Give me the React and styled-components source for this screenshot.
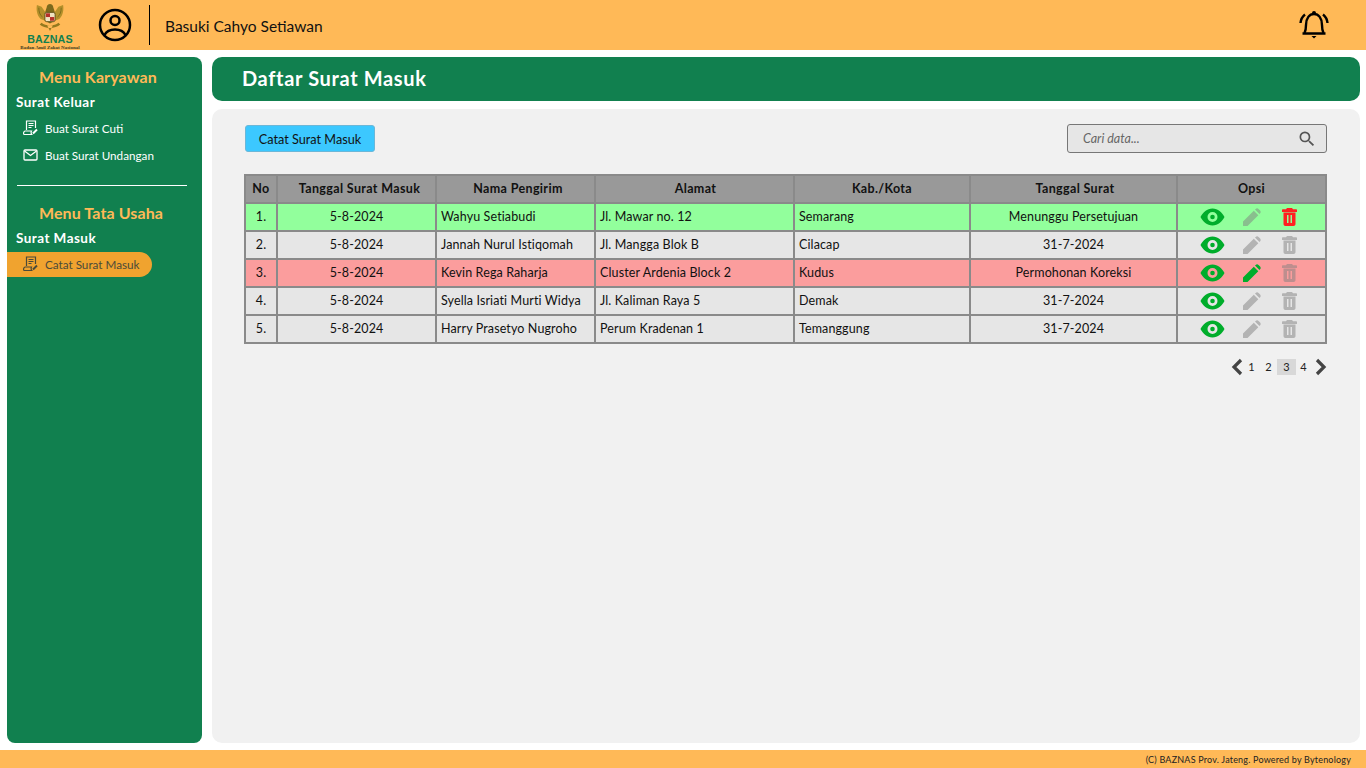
import React from "react";
import styled, { createGlobalStyle } from "styled-components";
import { MdSearch } from "react-icons/md";

const GlobalStyle = createGlobalStyle`
  html, body {
    margin: 0;
    padding: 0;
    background: #fff;
    font-family: "Lato", "Noto Sans", sans-serif;
  }
  * { box-sizing: border-box; }
`;

const Page = styled.div`
  width: 1366px;
  height: 768px;
  display: flex;
  flex-direction: column;
  overflow: hidden;
`;

const Header = styled.header`
  height: 50px;
  flex: none;
  background: #ffb957;
  display: flex;
  align-items: center;
  padding: 0 37px 0 20px;
`;

const Logo = styled.div`
  width: 60px;
  height: 50px;
  display: flex;
  flex-direction: column;
  align-items: center;
  padding-top: 3px;
`;

const LogoName = styled.span`
  font-family: "Liberation Sans", sans-serif;
  font-size: 10.7px;
  line-height: 10px;
  font-weight: 700;
  letter-spacing: 0.2px;
  color: #11804f;
  margin-top: 2px;
`;

const LogoTag = styled.span`
  font-family: "Liberation Serif", serif;
  font-size: 5px;
  line-height: 5px;
  font-weight: 700;
  color: #3d3d22;
  white-space: nowrap;
  margin-top: 1px;
`;

const Avatar = styled.svg`
  width: 34px;
  height: 34px;
  margin-left: 18px;
  flex: none;
`;

const Divider = styled.div`
  width: 1px;
  height: 40px;
  background: #000;
  margin: 0 15px 0 17px;
`;

const UserName = styled.div`
  font-size: 15.5px;
  color: #111;
  flex: 1;
  margin-top: 1px;
`;

const Bell = styled.svg`
  width: 30px;
  height: 30px;
  flex: none;
`;

const Body = styled.div`
  flex: 1;
  display: flex;
  gap: 10px;
  padding: 7px 6px 7px 7px;
  min-height: 0;
`;

const Sidebar = styled.aside`
  width: 195px;
  flex: none;
  background: #11804f;
  border-radius: 8px;
  display: flex;
  flex-direction: column;
  padding-top: 10px;
`;

const MenuTitle = styled.div`
  color: #ffb957;
  font-size: 16px;
  font-weight: 700;
  line-height: 20px;
  padding-left: 32px;
  letter-spacing: 0.1px;
`;

const MenuGroup = styled.div`
  color: #fff;
  font-size: 13.5px;
  font-weight: 700;
  line-height: 18px;
  padding-left: 9px;
  margin-top: 6px;
  margin-bottom: 5px;
  letter-spacing: 0.45px;
`;

const MenuItem = styled.div`
  width: 145px;
  height: 25px;
  margin-top: ${(p) => p.$gap || 0}px;
  display: flex;
  align-items: center;
  gap: 7px;
  padding: 0 0 2px 16px;
  font-size: 11.7px;
  white-space: nowrap;
  color: ${(p) => (p.$active ? "#4a4a3a" : "#fff")};
  background: ${(p) => (p.$active ? "#f0a32f" : "transparent")};
  border-radius: 0 13px 13px 0;
  svg {
    flex: none;
  }
`;

const MenuRule = styled.div`
  height: 1px;
  background: #fff;
  margin: 17px 15px 17px 10px;
`;

const Main = styled.main`
  flex: 1;
  display: flex;
  flex-direction: column;
  gap: 8px;
  min-width: 0;
`;

const TitleBar = styled.div`
  height: 44px;
  flex: none;
  background: #11804f;
  border-radius: 10px;
  display: flex;
  align-items: center;
  padding: 0 0 2px 30px;
  color: #fff;
  font-size: 20px;
  font-weight: 700;
  letter-spacing: 0.65px;
`;

const Panel = styled.section`
  flex: 1;
  background: #f1f1f1;
  border-radius: 10px;
  padding: 15px 33px;
`;

const Toolbar = styled.div`
  display: flex;
  justify-content: space-between;
  align-items: flex-start;
  height: 29px;
  margin-bottom: 21px;
`;

const AddButton = styled.button`
  width: 130px;
  height: 27px;
  margin-top: 1px;
  background: #3cc8ff;
  border: 1px solid #6bb7d8;
  border-radius: 3px;
  font-family: inherit;
  font-size: 12.7px;
  color: #111;
  padding: 0;
`;

const SearchBox = styled.div`
  width: 260px;
  height: 29px;
  background: #e6e6e6;
  border: 1px solid #777;
  border-radius: 3px;
  display: flex;
  align-items: center;
  justify-content: space-between;
  padding: 0 9px 0 15px;
  font-size: 12.5px;
  font-style: italic;
  color: #666;
`;

const Table = styled.table`
  width: 1081px;
  margin-left: -1px;
  border-collapse: collapse;
  table-layout: fixed;
  font-size: 12.5px;
  letter-spacing: 0.12px;
  color: #111;
`;

const HeadCell = styled.th`
  height: 28px;
  padding: 0 0 2px ${(p) => p.$pad}px;
  background: #999;
  border: 2px solid #8a8a8a;
  font-size: 12.5px;
  font-weight: 700;
  text-align: center;
  letter-spacing: 0.35px;
`;

const Cell = styled.td`
  height: 28px;
  padding: 0 0 1px ${(p) => (p.$center ? 0 : 4)}px;
  border: 2px solid #8a8a8a;
  text-align: ${(p) => (p.$center ? "center" : "left")};
  white-space: nowrap;
  overflow: hidden;
  background: ${(p) => p.$bg};
`;

const Actions = styled.div`
  display: flex;
  align-items: center;
  padding-left: 18px;
  height: 100%;
`;

const ActionIcon = styled.svg`
  flex: none;
  width: ${(p) => p.$w}px;
  height: ${(p) => p.$h}px;
  margin-right: ${(p) => p.$mr || 0}px;
  fill: ${(p) => p.$color};
`;

const Pager = styled.nav`
  display: flex;
  justify-content: flex-end;
  align-items: center;
  margin-top: 14px;
  font-size: 11px;
  color: #222;
  height: 18px;
`;

const PageNumber = styled.span`
  width: ${(p) => p.$w}px;
  height: 16px;
  line-height: 16px;
  text-align: center;
  background: ${(p) => (p.$active ? "#d8d8d8" : "transparent")};
`;

const PagerArrow = styled.svg`
  width: 12px;
  height: 18px;
  flex: none;
  margin-left: ${(p) => p.$ml || 0}px;
`;

const Footer = styled.footer`
  height: 18px;
  flex: none;
  background: #ffb957;
  display: flex;
  align-items: center;
  justify-content: flex-end;
  padding-right: 15px;
  font-size: 9px;
  letter-spacing: 0.2px;
  color: #222;
`;

const Garuda = () => (
  <svg width="28" height="29" viewBox="0 0 30 29">
    <path d="M1 1c-1 5 0 11 4 15l5 2V9L6 3zM29 1c1 5 0 11-4 15l-5 2V9l4-6z" fill="#b3902a" />
    <path d="M3 4c0 4 1 8 4 10M27 4c0 4-1 8-4 10" stroke="#7d6a1c" fill="none" />
    <path d="M15 0c-2 0-3.500 1.500-3.500 3.500L10 8v10l5 3 5-3V8l-1.500-4.500C18.500 1.500 17 0 15 0z" fill="#7d6a1c" />
    <rect x="9.500" y="9" width="11" height="10" rx="2" fill="#f0e2c0" stroke="#5d4c12" />
    <rect x="10.500" y="10" width="4.500" height="4" fill="#b5302a" />
    <rect x="15" y="14" width="4.500" height="4" fill="#b5302a" />
    <path d="M6 20c4 4 14 4 18 0l2 2c-5 5-17 5-22 0zM12 23l3 6 3-6z" fill="#93791e" />
  </svg>
);

const DocIcon = ({ color }) => (
  <svg width="15" height="16" viewBox="0 0 15 16" fill="none" stroke={color} strokeWidth="1.2">
    <path d="M3.500 10V1h9v7" />
    <path d="M5.500 3.500h5M5.500 5.500h5M5.500 7.500h3" />
    <path d="M1 14.500c-.8-1-.5-3 1-3.500h6.500c-.5 1-.5 2.500.3 3.500z" />
    <path d="M10 13.500l4-4" strokeWidth="2" />
  </svg>
);

const MailIcon = () => (
  <svg width="15" height="16" viewBox="0 0 15 16" fill="none" stroke="#fff" strokeWidth="1.3">
    <rect x="1" y="3" width="13" height="10" rx="1" />
    <path d="M1.500 4l6 4.500 6-4.500" />
  </svg>
);

const EyeIcon = () => (
  <ActionIcon $w={25} $h={18} $mr={18} $color="#00ad2b" viewBox="0 0 25 18">
    <path
      fillRule="evenodd"
      d="M12.500 .5C7 .5 3 4.500.5 9c2.500 4.500 6.500 8.500 12 8.500s9.500-4 12-8.500c-2.500-4.500-6.500-8.500-12-8.500zm0 3.500a5 5 0 1 1 0 10 5 5 0 0 1 0-10zm0 2.700a2.300 2.300 0 1 0 0 4.600 2.300 2.300 0 0 0 0-4.600z"
    />
  </ActionIcon>
);

const PencilIcon = ({ color }) => (
  <ActionIcon $w={18} $h={18} $mr={21} $color={color} viewBox="0 0 18 18">
    <path d="M0 18v-4.500L10.800 2.700l4.500 4.500L4.500 18zM12 1.500l.7-.6c.8-.8 2-.8 2.800 0l1.600 1.600c.8.8.8 2 0 2.800l-.6.700z" />
  </ActionIcon>
);

const TrashIcon = ({ color }) => (
  <ActionIcon $w={15} $h={18} $color={color} viewBox="0 0 15 18">
    <path
      fillRule="evenodd"
      d="M5 0h5l1 1.200h3c.6 0 1 .4 1 1v1.800H0V2.200c0-.6.4-1 1-1h3zM1.500 4.500h12V16c0 1.200-.8 2-2 2h-8c-1.200 0-2-.8-2-2zM5 7v8h1.500V7zm3.500 0v8H10V7z"
    />
  </ActionIcon>
);

const GREY = "rgba(128, 128, 128, 0.5)";
const COLS = [32, 159, 159, 199, 176, 207, 149];
const HEADS = [
  { label: "No", pad: 0 },
  { label: "Tanggal Surat Masuk", pad: 6 },
  { label: "Nama Pengirim", pad: 5 },
  { label: "Alamat", pad: 2 },
  { label: "Kab./Kota", pad: 0 },
  { label: "Tanggal Surat", pad: 3 },
  { label: "Opsi", pad: 0 },
];
const PAGES = [
  { n: 1, w: 17 },
  { n: 2, w: 17 },
  { n: 3, w: 19, active: true },
  { n: 4, w: 15 },
];

const ROWS = [
  { name: "Wahyu Setiabudi", addr: "Jl. Mawar no. 12", city: "Semarang", date: "Menunggu Persetujuan", bg: "#92ff9c", trash: "#ff2020" },
  { name: "Jannah Nurul Istiqomah", addr: "Jl. Mangga Blok B", city: "Cilacap", date: "31-7-2024", bg: "#e6e6e6" },
  { name: "Kevin Rega Raharja", addr: "Cluster Ardenia Block 2", city: "Kudus", date: "Permohonan Koreksi", bg: "#fb9d9d", pencil: "#00ad2b" },
  { name: "Syella Isriati Murti Widya", addr: "Jl. Kaliman Raya 5", city: "Demak", date: "31-7-2024", bg: "#e6e6e6" },
  { name: "Harry Prasetyo Nugroho", addr: "Perum Kradenan 1", city: "Temanggung", date: "31-7-2024", bg: "#e6e6e6" },
];

export default function App() {
  return (
    <Page>
      <GlobalStyle />
      <Header>
        <Logo>
          <Garuda />
          <LogoName>BAZNAS</LogoName>
          <LogoTag>Badan Amil Zakat Nasional</LogoTag>
        </Logo>
        <Avatar viewBox="0 0 34 34" fill="none" stroke="#000" strokeWidth="2.500">
          <circle cx="17" cy="17" r="15" />
          <circle cx="17" cy="12.500" r="4.500" />
          <path d="M6.500 27c2-4 6-5.500 10.500-5.500s8.500 1.500 10.500 5.500" />
        </Avatar>
        <Divider />
        <UserName>Basuki Cahyo Setiawan</UserName>
        <Bell viewBox="0 0 30 30" fill="none" stroke="#000" strokeWidth="2.400">
          <path d="M5.500 23c1-2 1.500-4 1.500-8 0-7 3.500-11 8-11s8 4 8 11c0 4 .5 6 1.500 8" />
          <path d="M3.500 23.500h23" strokeWidth="2.500" />
          <path d="M12.500 26h5L15 28.500z" fill="#000" stroke="none" />
          <circle cx="15" cy="3" r="2" fill="#000" stroke="none" />
          <path d="M1.500 13c.3-3 2-6.500 4.500-8.500M28.500 13c-.3-3-2-6.500-4.500-8.500" />
        </Bell>
      </Header>

      <Body>
        <Sidebar>
          <MenuTitle>Menu Karyawan</MenuTitle>
          <MenuGroup>Surat Keluar</MenuGroup>
          <MenuItem>
            <DocIcon color="#fff" />
            Buat Surat Cuti
          </MenuItem>
          <MenuItem $gap={2}>
            <MailIcon />
            Buat Surat Undangan
          </MenuItem>
          <MenuRule />
          <MenuTitle>Menu Tata Usaha</MenuTitle>
          <MenuGroup>Surat Masuk</MenuGroup>
          <MenuItem $active>
            <DocIcon color="#4a4a3a" />
            Catat Surat Masuk
          </MenuItem>
        </Sidebar>

        <Main>
          <TitleBar>Daftar Surat Masuk</TitleBar>
          <Panel>
            <Toolbar>
              <AddButton>Catat Surat Masuk</AddButton>
              <SearchBox>
                Cari data...
                <MdSearch size={20} color="#555" />
              </SearchBox>
            </Toolbar>
            <Table>
              <colgroup>
                {COLS.map((w, i) => (
                  <col key={i} width={w} />
                ))}
              </colgroup>
              <thead>
                <tr>
                  {HEADS.map((h) => (
                    <HeadCell key={h.label} $pad={h.pad}>{h.label}</HeadCell>
                  ))}
                </tr>
              </thead>
              <tbody>
                {ROWS.map((r, i) => (
                  <tr key={r.name}>
                    <Cell $center $bg={r.bg}>{i + 1}.</Cell>
                    <Cell $center $bg={r.bg}>5-8-2024</Cell>
                    <Cell $bg={r.bg}>{r.name}</Cell>
                    <Cell $bg={r.bg}>{r.addr}</Cell>
                    <Cell $bg={r.bg}>{r.city}</Cell>
                    <Cell $center $bg={r.bg}>{r.date}</Cell>
                    <Cell $bg={r.bg}>
                      <Actions>
                        <EyeIcon />
                        <PencilIcon color={r.pencil || GREY} />
                        <TrashIcon color={r.trash || GREY} />
                      </Actions>
                    </Cell>
                  </tr>
                ))}
              </tbody>
            </Table>
            <Pager>
              <PagerArrow viewBox="0 0 12 18" fill="none" stroke="#444" strokeWidth="3.200">
                <path d="M10 2L3 9l7 7" />
              </PagerArrow>
              {PAGES.map((p) => (
                <PageNumber key={p.n} $w={p.w} $active={p.active}>{p.n}</PageNumber>
              ))}
              <PagerArrow $ml={4} viewBox="0 0 12 18" fill="none" stroke="#444" strokeWidth="3.200">
                <path d="M2 2l7 7-7 7" />
              </PagerArrow>
            </Pager>
          </Panel>
        </Main>
      </Body>

      <Footer>(C) BAZNAS Prov. Jateng. Powered by Bytenology</Footer>
    </Page>
  );
}
